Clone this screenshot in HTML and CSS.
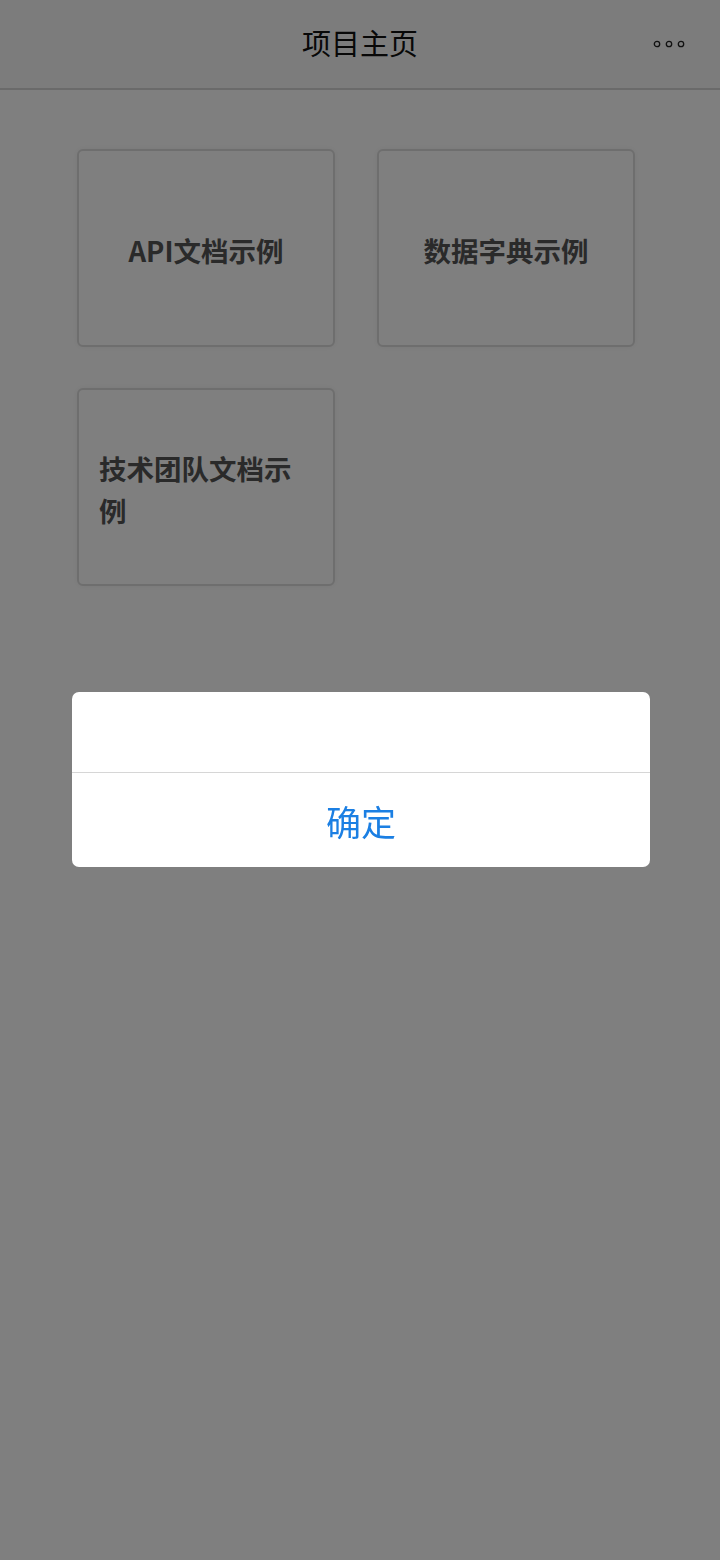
FILE: index.html
```html
<!DOCTYPE html>
<html lang="zh">
<head>
<meta charset="utf-8">
<title>项目主页</title>
<link rel="stylesheet" href="styles.css">
</head>
<body>
<div class="page">
  <header class="topbar">
    <h1 class="title">项目主页</h1>
    <div class="more">
      <svg width="34" height="10" viewBox="0 0 34 10">
        <circle cx="5" cy="5" r="2.7" fill="none" stroke="#222" stroke-width="1.3"/>
        <circle cx="17" cy="5" r="2.7" fill="none" stroke="#222" stroke-width="1.3"/>
        <circle cx="29" cy="5" r="2.7" fill="none" stroke="#222" stroke-width="1.3"/>
      </svg>
    </div>
  </header>
  <main class="grid">
    <div class="card"><span>API文档示例</span></div>
    <div class="card"><span>数据字典示例</span></div>
    <div class="card"><span>技术团队文档示例</span></div>
  </main>
</div>
<div class="mask"></div>
<div class="dialog">
  <div class="dialog-body"></div>
  <div class="dialog-btn">确定</div>
</div>
</body>
</html>
```
FILE: styles.css
```css
html, body {
  margin: 0;
  padding: 0;
  background: #ffffff;
  font-family: "Noto Sans CJK SC", "Noto Sans", sans-serif;
}
.page {
  width: 720px;
  min-height: 1560px;
  background: #ffffff;
}
.topbar {
  height: 88px;
  background: #f9f9f9;
  border-bottom: 2px solid #d4d4d4;
  display: flex;
  align-items: center;
  justify-content: center;
  position: relative;
}
.title {
  margin: 0 0 4px 0;
  font-size: 29px;
  font-weight: 400;
  color: #111;
  line-height: 1;
}
.more {
  position: absolute;
  right: 34px;
  top: 39px;
  line-height: 0;
}
.grid {
  display: grid;
  grid-template-columns: 258px 258px;
  column-gap: 42px;
  row-gap: 41px;
  padding: 59px 0 0 77px;
}
.card {
  height: 198px;
  box-sizing: border-box;
  border: 2px solid #dcdcdc;
  border-radius: 6px;
  background: #ffffff;
  box-shadow: 0 0 6px rgba(0,0,0,0.06);
  display: flex;
  align-items: center;
  justify-content: center;
  padding: 4px 20px 0 20px;
  font-size: 27.5px;
  font-weight: 700;
  color: #555;
  line-height: 42px;
}
.mask {
  position: fixed;
  inset: 0;
  background: rgba(0,0,0,0.5);
}
.dialog {
  position: fixed;
  left: 72px;
  top: 692px;
  width: 578px;
  background: #fff;
  border-radius: 7px;
  overflow: hidden;
}
.dialog-body {
  height: 80px;
  border-bottom: 1px solid #d6d6d6;
}
.dialog-btn {
  height: 94px;
  display: flex;
  align-items: center;
  justify-content: center;
  font-size: 35px;
  color: #1b7fe3;
}
```
